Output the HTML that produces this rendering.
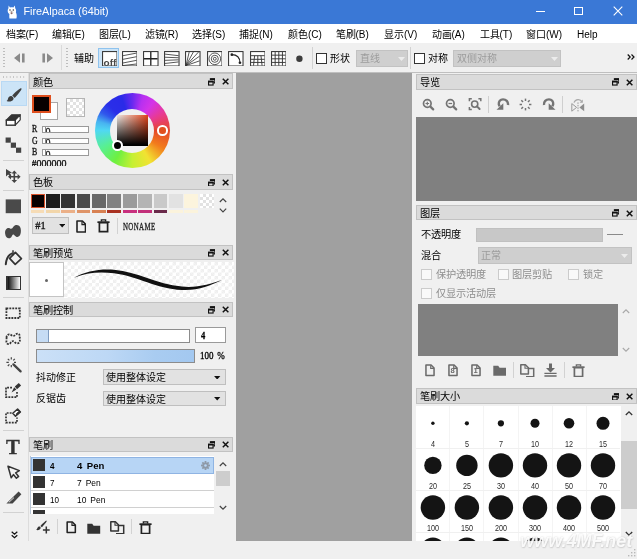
<!DOCTYPE html>
<html lang="zh-CN"><head><meta charset="utf-8"><title>FireAlpaca (64bit)</title>
<style>
*{box-sizing:border-box}
html,body{margin:0;padding:0}
body{width:637px;height:559px;overflow:hidden;background:#f0f0f0;position:relative;
 font-family:"Liberation Sans",sans-serif;font-size:10px;color:#000;line-height:1}
div,span,svg,i,b{position:absolute;display:block}
.t{white-space:nowrap;line-height:12px;height:12px}
.hd{background:#dbdbdb;border:1px solid #c2c2c2;height:15.7px}
.hd .t{left:3px;top:2.3px;font-size:10.2px}
.ser{font-family:"Liberation Serif",serif;-webkit-text-stroke:.3px currentColor}
.ck{background-color:#fff;background-image:linear-gradient(45deg,#e2e2e2 25%,transparent 25%,transparent 75%,#e2e2e2 75%),linear-gradient(45deg,#e2e2e2 25%,transparent 25%,transparent 75%,#e2e2e2 75%);background-size:8px 8px;background-position:0 0,4px 4px}
.sep{background:#d2d2d2;width:1px}
.hsep{background:#d2d2d2;height:1px}
.dd{background:#e2e2e2;border:1px solid #bfbfbf}
.cb{width:11px;height:11px;background:#fff;border:1px solid #333}
.cbd{width:11px;height:11px;background:#f9f9f9;border:1px solid #cbcbcb}
</style></head>
<body>
<div id="app" style="left:0;top:0;width:637px;height:559px;overflow:hidden;background:#f0f0f0;will-change:transform">
<div id="titlebar" style="left:0;top:0;width:637px;height:24px;background:#3a78d6"><svg style="left:7.4px;top:4.6px" width="11" height="14" viewBox="0 0 11 14"><path d="M1.6 .4L3 2.6C4.2 2.2 5.4 2.2 6.4 2.6L7.8 .4L8.3 3.4C9.2 4.4 9.3 6 8.9 7.4C9.8 9 10 11.4 9.4 13.4H2.4C2.2 11.6 2.2 10.2 2.4 9C1 8.2 .4 6.6 .8 4.8C.9 4.2 1.1 3.8 1.4 3.4Z" fill="#fff"/><ellipse cx="4.6" cy="7.2" rx="1.9" ry="1.7" fill="#e9e2de"/><circle cx="3" cy="5" r=".75" fill="#3a3a3a"/><circle cx="6.3" cy="5" r=".75" fill="#3a3a3a"/><ellipse cx="4.6" cy="8.3" rx=".9" ry="1" fill="#8f6a64"/><path d="M3.9 6.4h1.4l-.7.8z" fill="#555"/></svg><span class="t" style="left:23.5px;top:5px;font-size:10.8px;color:#fff;line-height:13px;height:13px">FireAlpaca (64bit)</span><div style="left:536px;top:11px;width:9px;height:1px;background:#fff"></div><div style="left:574px;top:7px;width:9px;height:8px;border:1px solid #fff"></div><svg style="left:613px;top:6px" width="10" height="10" viewBox="0 0 10 10"><path d="M.7 .7L9.3 9.3M9.3 .7L.7 9.3" stroke="#fff" stroke-width="1.1"/></svg></div>
<div id="menubar" style="left:0;top:24px;width:637px;height:19px;background:#fff"><span class="t" style="left:5.5px;top:5px">档案(F)</span><span class="t" style="left:51.5px;top:5px">编辑(E)</span><span class="t" style="left:98.5px;top:5px">图层(L)</span><span class="t" style="left:144.5px;top:5px">滤镜(R)</span><span class="t" style="left:192px;top:5px">选择(S)</span><span class="t" style="left:239px;top:5px">捕捉(N)</span><span class="t" style="left:288px;top:5px">颜色(C)</span><span class="t" style="left:335.5px;top:5px">笔刷(B)</span><span class="t" style="left:384px;top:5px">显示(V)</span><span class="t" style="left:431.5px;top:5px">动画(A)</span><span class="t" style="left:479.5px;top:5px">工具(T)</span><span class="t" style="left:526px;top:5px">窗口(W)</span><span class="t" style="left:577px;top:5px">Help</span></div>
<div id="toolbar" style="left:0;top:43px;width:637px;height:30px;background:#f0f0f0;border-bottom:1px solid #bfbfbf"><div style="left:3px;top:5px;width:2px;height:21px;background-image:linear-gradient(#bdbdbd 1px,transparent 1px);background-size:2px 3px"></div><div style="left:66px;top:5px;width:2px;height:21px;background-image:linear-gradient(#bdbdbd 1px,transparent 1px);background-size:2px 3px"></div><div class="sep" style="left:61px;top:2px;height:25px;background:#dadada"></div><svg style="left:14px;top:10px" width="11" height="10" viewBox="0 0 11 10"><path d="M6 .3V9.7L0 5Z M8 .5H10.6V9.5H8Z" fill="#8a8a8a"/></svg><svg style="left:42px;top:10px" width="11" height="10" viewBox="0 0 11 10"><path d="M5 .3V9.7L11 5Z M.4 .5H3V9.5H.4Z" fill="#8a8a8a"/></svg><span class="t" style="left:73.5px;top:10px">辅助</span><div style="left:98px;top:4.5px;width:21px;height:20.5px;background:#cce4f7;border:1px solid #8fc3ee"></div><svg style="left:101.5px;top:7.5px" width="15.6" height="15.6" viewBox="0 0 15 15"><rect x=".55" y=".55" width="13.9" height="13.9" fill="#fff" stroke="#333" stroke-width="1"/><text x="1.5" y="14" style="font-family:'Liberation Sans',sans-serif;font-weight:bold;font-size:9.6px" fill="#474747">off</text></svg><svg style="left:121.5px;top:7.5px" width="15.6" height="15.6" viewBox="0 0 15 15"><rect x=".55" y=".55" width="13.9" height="13.9" fill="#fff" stroke="#333" stroke-width="1"/><path d="M1 4.5L14 2M1 8L14 5.5M1 11.5L14 9M1 14L14 12.5" stroke="#333" stroke-width=".8" fill="none"/></svg><svg style="left:143px;top:7.5px" width="15.6" height="15.6" viewBox="0 0 15 15"><rect x=".55" y=".55" width="13.9" height="13.9" fill="#fff" stroke="#333" stroke-width="1"/><path d="M7.5 1V14M1 7.5H14" stroke="#222" stroke-width="1.3"/></svg><svg style="left:164px;top:7.5px" width="15.6" height="15.6" viewBox="0 0 15 15"><rect x=".55" y=".55" width="13.9" height="13.9" fill="#fff" stroke="#333" stroke-width="1"/><path d="M1 3L14 4.5M1 6L14 6.5M1 9L14 8.5M1 12L14 10.5" stroke="#333" stroke-width=".8" fill="none"/></svg><svg style="left:185px;top:7.5px" width="15.6" height="15.6" viewBox="0 0 15 15"><rect x=".55" y=".55" width="13.9" height="13.9" fill="#fff" stroke="#333" stroke-width="1"/><path d="M1 14L4 1M1 14L8 1M1 14L13 1M1 14L14 5M1 14L14 9.5" stroke="#333" stroke-width=".8" fill="none"/></svg><svg style="left:206.5px;top:7.5px" width="15.6" height="15.6" viewBox="0 0 15 15"><rect x=".55" y=".55" width="13.9" height="13.9" fill="#fff" stroke="#333" stroke-width="1"/><circle cx="7.5" cy="7.5" r="5.6" fill="none" stroke="#333" stroke-width=".8"/><circle cx="7.5" cy="7.5" r="3.4" fill="none" stroke="#333" stroke-width=".8"/><circle cx="7.5" cy="7.5" r="1.4" fill="none" stroke="#333" stroke-width=".8"/></svg><svg style="left:228px;top:7.5px" width="15.6" height="15.6" viewBox="0 0 15 15"><rect x=".55" y=".55" width="13.9" height="13.9" fill="#fff" stroke="#333" stroke-width="1"/><path d="M3.5 3.5C8.5 3.5 11.5 6.5 11.5 11.5" stroke="#222" stroke-width="1" fill="none"/><circle cx="3.7" cy="3.5" r="1.3" fill="#222"/><circle cx="11.5" cy="11.3" r="1.3" fill="#222"/></svg><svg style="left:249.5px;top:7.5px" width="15.6" height="15.6" viewBox="0 0 15 15"><rect x=".55" y=".55" width="13.9" height="13.9" fill="#fff" stroke="#333" stroke-width="1"/><path d="M1 4.5H14M1 8H14M1 11H14M4 8L3.4 14M7.5 8V14M11 8L11.6 14M4.5 4.5L4 8M7.5 4.5V8M10.5 4.5L11 8" stroke="#333" stroke-width=".9" fill="none"/></svg><svg style="left:270.5px;top:7.5px" width="15.6" height="15.6" viewBox="0 0 15 15"><rect x=".55" y=".55" width="13.9" height="13.9" fill="#fff" stroke="#333" stroke-width="1"/><path d="M1 4H14M1 7.5H14M1 11H14M4 1V14M7.5 1V14M11 1V14" stroke="#333" stroke-width=".9" fill="none"/></svg><svg style="left:295px;top:11px" width="9" height="9" viewBox="0 0 9 9"><circle cx="4.4" cy="4.7" r="3.2" fill="#3c3c3c"/></svg><div class="sep" style="left:312px;top:4px;height:22px"></div><div class="cb" style="left:315.5px;top:10px"></div><span class="t" style="left:329.5px;top:10px">形状</span><div style="left:355.5px;top:7px;width:52.5px;height:17px;background:#cfcfcf;border:1px solid #c2c2c2"><span class="t" style="left:3.5px;top:2px;color:#9c9c9c">直线</span><svg style="left:41px;top:6px" width="7" height="4" viewBox="0 0 7 4"><path d="M0 0H7L3.5 4Z" fill="#ececec"/></svg></div><div class="sep" style="left:410px;top:4px;height:22px"></div><div class="cb" style="left:413.5px;top:10px"></div><span class="t" style="left:428px;top:10px">对称</span><div style="left:453px;top:7px;width:108px;height:17px;background:#cfcfcf;border:1px solid #c2c2c2"><span class="t" style="left:3px;top:2px;color:#9c9c9c">双侧对称</span><svg style="left:96.5px;top:6px" width="7" height="4" viewBox="0 0 7 4"><path d="M0 0H7L3.5 4Z" fill="#ececec"/></svg></div><svg style="left:627px;top:10.5px" width="8" height="6" viewBox="0 0 8 6"><path d="M.7 .5L3.2 3L.7 5.5M4.5 .5L7 3L4.5 5.5" fill="none" stroke="#111" stroke-width="1.2"/></svg></div>
<div id="canvas" style="left:236px;top:73px;width:176px;height:468px;background:#a0a0a0"></div>
<div id="tools" style="left:0;top:73px;width:29px;height:468.5px;background:#f0f0f0;border-right:1px solid #dcdcdc;border-bottom:1px solid #d4d4d4"><div style="left:3px;top:3px;width:22px;height:2px;background-image:linear-gradient(90deg,#c0c0c0 1.2px,transparent 1.2px);background-size:3.4px 2px"></div><div style="left:1px;top:8px;width:26px;height:25px;background:#cce4f7;border:1px solid #b9d9f4"></div><svg style="left:4px;top:12px" width="20" height="20" viewBox="0 0 20 20"><g transform="translate(1.2 1.6) scale(.9)"><path d="M17.4 1.8C15.6 2.2 10.4 6.8 7.8 10L10.6 12.6C13.6 9.6 17.6 4.8 18.2 2.8C18.3 2.2 18 1.7 17.4 1.8Z" fill="#3f3f3f"/><path d="M7.4 10.6C5.6 9.9 3.6 11.2 3.2 13.2C3 14.4 2.5 15.3 1.6 15.9C3.8 17.2 7.6 16.8 9 14.4C9.8 13 9.2 11.4 7.4 10.6Z" fill="#3f3f3f"/></g></svg><svg style="left:4px;top:38px" width="20" height="20" viewBox="0 0 20 20"><path d="M2.3 9.2L7.6 3.8H16.2L11.2 9.2Z" fill="#333" stroke="#333" stroke-width="1.2" stroke-linejoin="round"/><path d="M11.2 9.2L16.2 3.8V8.8L11.2 14.2Z" fill="#fff" stroke="#333" stroke-width="1.2" stroke-linejoin="round"/><rect x="2.3" y="9.2" width="8.9" height="5" fill="#fff" stroke="#333" stroke-width="1.4"/></svg><svg style="left:4px;top:63px" width="20" height="20" viewBox="0 0 20 20"><rect x="1.6" y="1.5" width="5.2" height="5.2" fill="#444"/><rect x="6.8" y="6.6" width="5.2" height="5.2" fill="#444"/><rect x="12" y="11.6" width="5.2" height="5.2" fill="#444"/></svg><div class="hsep" style="left:3px;top:86.5px;width:21px"></div><svg style="left:4px;top:93.80000000000001px" width="20" height="20" viewBox="0 0 20 20"><path d="M2 2V9.6L4.2 7.6L6.3 9.4L7.4 8.2L5.6 6.6L8 5.8Z" fill="#444"/><path d="M10.3 3.6L13.1 6.6H11.1V9H13.6V7L16.6 9.8L13.6 12.6V10.6H11.1V13H13.1L10.3 16L7.5 13H9.5V10.6H7V12.6L4 9.8L7 7V9H9.5V6.6H7.5Z" fill="#444"/></svg><div class="hsep" style="left:3px;top:117px;width:21px"></div><svg style="left:4px;top:126px" width="20" height="20" viewBox="0 0 20 20"><rect x="1.7" y=".4" width="15.3" height="13.8" fill="#4a4a4a"/></svg><svg style="left:4px;top:151px" width="20" height="20" viewBox="0 0 20 20"><path d="M1.2 10C.4 5.6 3.4 2.8 6 4.4C7.4 5.2 8.4 4.6 9.4 2.8C11 .2 15.6 .4 16.6 4.2C17.2 6.6 17 9.8 15.6 11.8C14.2 13.6 11.8 13 10.6 11.4C9.6 10 8.6 10.4 7.8 12.2C6.4 15.4 1.8 15 1.2 10Z" fill="#474747"/></svg><svg style="left:4px;top:176px" width="20" height="20" viewBox="0 0 20 20"><path d="M11.4 3.4L17.4 9.6L11.2 15.4L5.6 9.4Z" fill="none" stroke="#333" stroke-width="1.7" stroke-linejoin="round"/><path d="M9 1.2V6.2" stroke="#333" stroke-width="1.5"/><path d="M7.8 4.6C4.2 6 2.4 9.6 1.8 15.2" fill="none" stroke="#333" stroke-width="2" stroke-linecap="round"/></svg><div style="left:5.5px;top:203px;width:15.5px;height:13.5px;border:1px solid #333;border-left-width:2px;background:linear-gradient(90deg,#111,#fff)"></div><div class="hsep" style="left:3px;top:223.8px;width:21px"></div><svg style="left:4px;top:233px" width="20" height="20" viewBox="0 0 20 20"><rect x="2.4" y="2.4" width="13.4" height="9.6" fill="none" stroke="#333" stroke-width="1.8" stroke-dasharray="1.9 1.05"/></svg><svg style="left:4px;top:258px" width="20" height="20" viewBox="0 0 20 20"><path d="M2.6 6.6C2.2 3.6 5.2 2.6 7.4 4.2C9 5.4 10.4 4.8 11.6 3.6C13.6 1.6 16 3 15.8 5.6C15.6 8 16.4 9.8 15.2 11.4C14 13 11.6 12.2 10.6 11C9.4 9.6 7.8 10 6.8 11.6C5.6 13.6 2.8 13.6 2.4 10.8Z" fill="none" stroke="#333" stroke-width="1.8" stroke-dasharray="1.9 1.1"/></svg><svg style="left:4px;top:281px" width="20" height="20" viewBox="0 0 20 20"><path d="M9.4 10.4L16.6 17.4" stroke="#444" stroke-width="2.3" stroke-linecap="round"/><path d="M7.3 3.2V5.6M7.3 11V13.2M2.4 8.4H4.8M10 8.4H12M3.8 4.8L5.4 6.4M10.8 4.8L9.3 6.4M3.8 12L5.4 10.4" stroke="#444" stroke-width="1.2"/></svg><svg style="left:4px;top:308px" width="20" height="20" viewBox="0 0 20 20"><path d="M8 6.6H2V16.2H13V11" fill="none" stroke="#333" stroke-width="1.7" stroke-dasharray="1.9 1.1"/><path d="M10.8 5.4L14.8 1.9L17.1 4.4L13 8.2Z" fill="#333"/><path d="M10.2 6.2L12.4 8.6L7.6 11.4Z" fill="#333"/></svg><svg style="left:4px;top:333px" width="20" height="20" viewBox="0 0 20 20"><path d="M7.6 7H2V16.6H13V11.6" fill="none" stroke="#333" stroke-width="1.7" stroke-dasharray="1.9 1.1"/><path d="M8.8 7.2L13.6 3L16.4 5.9L11.5 10.2Z" fill="#fff" stroke="#333" stroke-width="1.5" stroke-linejoin="round"/><path d="M12.6 7.4L15.4 5L16.4 5.9L12 9.8Z" fill="#333" stroke="#333" stroke-width=".8"/></svg><div class="hsep" style="left:3px;top:357px;width:21px"></div><span class="t ser" style="left:5.8px;top:362px;font-size:22px;font-weight:bold;line-height:24px;height:24px;color:#333;transform:scaleX(.94);transform-origin:0 0">T</span><svg style="left:4px;top:390px" width="20" height="20" viewBox="0 0 20 20"><path d="M4 3.2L15.4 7.6L11.6 9.8L14.6 13.4L12.4 15.2L9.4 11.6L7.2 14.8Z" fill="#f4f4f4" stroke="#333" stroke-width="1.5" stroke-linejoin="round"/></svg><svg style="left:4px;top:415px" width="20" height="20" viewBox="0 0 20 20"><path d="M2.4 15.4L14.6 3.4L17.4 6.2L8.6 15.4Z" fill="#444"/><path d="M4.8 14.4L10 9.6" stroke="#ddd" stroke-width="1"/></svg><div class="hsep" style="left:3px;top:439px;width:21px"></div><svg style="left:10.5px;top:458px" width="7" height="8" viewBox="0 0 7 8"><path d="M.7 .7L3.5 3.2L6.3 .7M.7 4.3L3.5 6.8L6.3 4.3" fill="none" stroke="#111" stroke-width="1.2"/></svg></div>
<div class="hd" style="left:28.6px;top:73.4px;width:204.1px;height:15.7px"><span class="t">颜色</span></div><svg style="left:208.1px;top:77.80000000000001px" width="7.4" height="7.8" viewBox="0 0 8 8"><path d="M2.6 1 H7.4 V5 H6" fill="none" stroke="#111" stroke-width="1.25"/><path d="M2 1H8" stroke="#111" stroke-width="2"/><rect x=".6" y="3.6" width="4.9" height="3.8" fill="#dbdbdb" stroke="#111" stroke-width="1.25"/><path d="M0 3.6H6.1" stroke="#111" stroke-width="2"/></svg><svg style="left:221.79999999999998px;top:78.2px" width="7.2" height="7" viewBox="0 0 8 8"><path d="M.8 .8L7.2 7.2M7.2 .8L.8 7.2" stroke="#111" stroke-width="1.65"/></svg><div style="left:40px;top:102.3px;width:18px;height:18px;background:#fff;border:1px solid #a8a8a8"></div><div style="left:32px;top:94.5px;width:18.5px;height:18.5px;background:#080000;border:2px solid #df4f1e"></div><div class="ck" style="left:66px;top:98px;width:19px;height:19px;border:1px solid #b4b4b4;background-size:6px 6px;background-position:0 0,3px 3px"></div><span class="t ser" style="left:31.5px;top:123.1px;font-size:9.6px;transform:scaleX(.82);transform-origin:0 0;color:#111">R</span><div style="left:42px;top:126px;width:46.5px;height:6.5px;background:#fff;border:1px solid #9a9a9a;overflow:hidden"><span class="t ser" style="left:2.5px;top:-1.5px;font-size:10px;color:#222;letter-spacing:-.5px">0</span><i style="left:1.5px;top:0;width:1px;height:5px;background:#888"></i></div><span class="t ser" style="left:31.5px;top:134.6px;font-size:9.6px;transform:scaleX(.82);transform-origin:0 0;color:#111">G</span><div style="left:42px;top:137.5px;width:46.5px;height:6.5px;background:#fff;border:1px solid #9a9a9a;overflow:hidden"><span class="t ser" style="left:2.5px;top:-1.5px;font-size:10px;color:#222;letter-spacing:-.5px">0</span><i style="left:1.5px;top:0;width:1px;height:5px;background:#888"></i></div><span class="t ser" style="left:31.5px;top:146.1px;font-size:9.6px;transform:scaleX(.82);transform-origin:0 0;color:#111">B</span><div style="left:42px;top:149px;width:46.5px;height:6.5px;background:#fff;border:1px solid #9a9a9a;overflow:hidden"><span class="t ser" style="left:2.5px;top:-1.5px;font-size:10px;color:#222;letter-spacing:-.5px">0</span><i style="left:1.5px;top:0;width:1px;height:5px;background:#888"></i></div><div style="left:31.5px;top:159.5px;width:40px;height:6.6px;overflow:hidden"><span class="t ser" style="left:0;top:-2px;font-size:10px;color:#111">#000000</span></div><div style="left:94.5px;top:92.7px;width:75.6px;height:75.6px;border-radius:50%;background:conic-gradient(from 90deg,#e4482a,#f27c1c 8.3%,#f2e232 16.7%,#c6f032 25%,#6ef040 33.3%,#58f092 41.7%,#50d8f2 50%,#48b4f0 54%,#3058ec 58.5%,#2a2ee8 63%,#2a2ae8 70%,#6a2af0 75%,#b830f0 80%,#d434e8 85%,#e83a90 92%,#e4482a)"></div><div style="left:110.3px;top:108.5px;width:44px;height:44px;border-radius:50%;background:#f0f0f0"></div><div style="left:117px;top:115px;width:31px;height:31px;background:linear-gradient(to top,#000 4%,rgba(0,0,0,0)),linear-gradient(to right,#ece8e4,#e2441a)"></div><div style="left:157px;top:125px;width:10.5px;height:10.5px;border-radius:50%;border:2px solid #fff;background:#e0501e"></div><div style="left:111.5px;top:139.5px;width:11px;height:11px;border-radius:50%;border:2px solid #fff;background:#000"></div><div class="hd" style="left:28.6px;top:174.1px;width:204.1px;height:15.7px"><span class="t">色板</span></div><svg style="left:208.1px;top:178.5px" width="7.4" height="7.8" viewBox="0 0 8 8"><path d="M2.6 1 H7.4 V5 H6" fill="none" stroke="#111" stroke-width="1.25"/><path d="M2 1H8" stroke="#111" stroke-width="2"/><rect x=".6" y="3.6" width="4.9" height="3.8" fill="#dbdbdb" stroke="#111" stroke-width="1.25"/><path d="M0 3.6H6.1" stroke="#111" stroke-width="2"/></svg><svg style="left:221.79999999999998px;top:178.9px" width="7.2" height="7" viewBox="0 0 8 8"><path d="M.8 .8L7.2 7.2M7.2 .8L.8 7.2" stroke="#111" stroke-width="1.65"/></svg><div style="left:30.6px;top:193.7px;width:14.4px;height:14.8px;background:#080000;border:1.5px solid #d9512a"></div><div style="left:30.6px;top:209.6px;width:13.8px;height:3.8px;background:#f6dcb6"></div><div style="left:46.0px;top:194px;width:13.8px;height:14.3px;background:#1d1d1d"></div><div style="left:46.0px;top:209.6px;width:13.8px;height:3.8px;background:#f2d6aa"></div><div style="left:61.3px;top:194px;width:13.8px;height:14.3px;background:#333"></div><div style="left:61.3px;top:209.6px;width:13.8px;height:3.8px;background:#ebb088"></div><div style="left:76.7px;top:194px;width:13.8px;height:14.3px;background:#4b4b4b"></div><div style="left:76.7px;top:209.6px;width:13.8px;height:3.8px;background:#df9468"></div><div style="left:92.1px;top:194px;width:13.8px;height:14.3px;background:#686868"></div><div style="left:92.1px;top:209.6px;width:13.8px;height:3.8px;background:#d88152"></div><div style="left:107.4px;top:194px;width:13.8px;height:14.3px;background:#828282"></div><div style="left:107.4px;top:209.6px;width:13.8px;height:3.8px;background:#a93222"></div><div style="left:122.8px;top:194px;width:13.8px;height:14.3px;background:#9b9b9b"></div><div style="left:122.8px;top:209.6px;width:13.8px;height:3.8px;background:#c8307e"></div><div style="left:138.2px;top:194px;width:13.8px;height:14.3px;background:#b4b4b4"></div><div style="left:138.2px;top:209.6px;width:13.8px;height:3.8px;background:#c2307a"></div><div style="left:153.6px;top:194px;width:13.8px;height:14.3px;background:#c9c9c9"></div><div style="left:153.6px;top:209.6px;width:13.8px;height:3.8px;background:#6a2a4a"></div><div style="left:168.9px;top:194px;width:13.8px;height:14.3px;background:#e2e2e2"></div><div style="left:168.9px;top:209.6px;width:13.8px;height:3.8px;background:#fbf3dc"></div><div style="left:184.3px;top:194px;width:13.8px;height:14.3px;background:#fcf4dd"></div><div style="left:184.3px;top:209.6px;width:13.8px;height:3.8px;background:#fbf3dc"></div><div class="ck" style="left:199.7px;top:194px;width:14px;height:14.3px;background-size:6px 6px;background-position:0 0,3px 3px"></div><svg style="left:218.5px;top:197px" width="8" height="17" viewBox="0 0 8 17"><path d="M.8 5L4 1.8L7.2 5M.8 11.6L4 14.8L7.2 11.6" fill="none" stroke="#444" stroke-width="1.2"/></svg><div class="dd" style="left:32.3px;top:217.4px;width:37px;height:16.8px"><span class="t ser" style="left:2px;top:1.8px;font-size:10.4px;color:#111">#1</span><svg style="left:25.4px;top:5.8px" width="6.4" height="3.5" viewBox="0 0 7 4"><path d="M0 0H7L3.5 4Z" fill="#111"/></svg></div><svg style="left:75.5px;top:219.5px" width="10.5" height="13" viewBox="0 0 10.5 13"><path d="M1 1H6.4L9.5 4.2V12H1Z" fill="#f0f0f0" stroke="#222" stroke-width="1.6" stroke-linejoin="round"/><path d="M6 1.2V4.6H9.4" fill="none" stroke="#222" stroke-width="1.2"/></svg><svg style="left:97.3px;top:219px" width="13" height="13.5" viewBox="0 0 13 13.5"><path d="M2.4 3.6H10.6V12.6H2.4Z" fill="#f0f0f0" stroke="#222" stroke-width="1.7"/><path d="M.4 3.2H12.6" stroke="#222" stroke-width="1.7"/><path d="M4.4 2.6V.9H8.6V2.6" fill="none" stroke="#222" stroke-width="1.4"/></svg><div class="sep" style="left:117px;top:218px;height:16px"></div><span class="t ser" style="left:122.5px;top:220.5px;font-size:9.6px;letter-spacing:.5px;transform:scaleX(.72);transform-origin:0 0;color:#222">NONAME</span><div class="hd" style="left:28.6px;top:244.6px;width:204.1px;height:15.7px"><span class="t">笔刷预览</span></div><svg style="left:208.1px;top:249.0px" width="7.4" height="7.8" viewBox="0 0 8 8"><path d="M2.6 1 H7.4 V5 H6" fill="none" stroke="#111" stroke-width="1.25"/><path d="M2 1H8" stroke="#111" stroke-width="2"/><rect x=".6" y="3.6" width="4.9" height="3.8" fill="#dbdbdb" stroke="#111" stroke-width="1.25"/><path d="M0 3.6H6.1" stroke="#111" stroke-width="2"/></svg><svg style="left:221.79999999999998px;top:249.4px" width="7.2" height="7" viewBox="0 0 8 8"><path d="M.8 .8L7.2 7.2M7.2 .8L.8 7.2" stroke="#111" stroke-width="1.65"/></svg><div class="ck" style="left:63.5px;top:262px;width:170px;height:36px;background-color:#fff;background-image:linear-gradient(45deg,#efefef 25%,transparent 25%,transparent 75%,#efefef 75%),linear-gradient(45deg,#efefef 25%,transparent 25%,transparent 75%,#efefef 75%);background-size:7px 7px;background-position:0 0,3.5px 3.5px"></div><div style="left:28.8px;top:262.3px;width:34.8px;height:34.7px;background:#fff;border:1px solid #c4c4c4"></div><div style="left:44.7px;top:278.6px;width:3px;height:3px;border-radius:50%;background:#666"></div><svg style="left:63.5px;top:262px" width="170" height="36" viewBox="0 0 170 36"><path d="M10 15.8C22 9 36 6.6 50 7.8C74 10 92 22 118 24.6C134 26 146 22 158 18C146 23.8 134 28.8 118 28C92 26.6 74 14.4 50 11.2C36 9.4 22 10.4 10 15.8Z" fill="#111"/></svg><div class="hd" style="left:28.6px;top:301.6px;width:204.1px;height:15.7px"><span class="t">笔刷控制</span></div><svg style="left:208.1px;top:306.0px" width="7.4" height="7.8" viewBox="0 0 8 8"><path d="M2.6 1 H7.4 V5 H6" fill="none" stroke="#111" stroke-width="1.25"/><path d="M2 1H8" stroke="#111" stroke-width="2"/><rect x=".6" y="3.6" width="4.9" height="3.8" fill="#dbdbdb" stroke="#111" stroke-width="1.25"/><path d="M0 3.6H6.1" stroke="#111" stroke-width="2"/></svg><svg style="left:221.79999999999998px;top:306.40000000000003px" width="7.2" height="7" viewBox="0 0 8 8"><path d="M.8 .8L7.2 7.2M7.2 .8L.8 7.2" stroke="#111" stroke-width="1.65"/></svg><div style="left:36px;top:328.8px;width:154.3px;height:14px;background:#fff;border:1px solid #8c8c8c"><i style="left:0;top:0;width:11.6px;height:12px;background:#c6dcf4;border-right:1px solid #7f9cc0"></i></div><div style="left:195px;top:327px;width:30.5px;height:16.3px;background:#fff;border:1px solid #9a9a9a"><span class="t ser" style="left:4.6px;top:1.8px;font-size:10px;transform:scaleX(.85);transform-origin:0 0;color:#000;font-weight:bold">4</span></div><div style="left:36px;top:349px;width:159.3px;height:14px;border:1px solid #8c8c8c;background:linear-gradient(90deg,#cbe0f7,#bdd8f5 45%,#a9ccf1 75%,#a3c8f0)"></div><span class="t ser" style="left:200px;top:350.3px;font-size:10px;word-spacing:1.6px;transform:scaleX(.9);transform-origin:0 0;color:#000">100 %</span><span class="t" style="left:36px;top:371.7px">抖动修正</span><span class="t" style="left:36px;top:393.2px">反锯齿</span><div class="dd" style="left:103px;top:369px;width:122.5px;height:15.8px"><span class="t" style="left:2px;top:2.1px">使用整体设定</span><svg style="left:110.2px;top:5.8px" width="6.4" height="3.6" viewBox="0 0 7 4"><path d="M0 0H7L3.5 4Z" fill="#111"/></svg></div><div class="dd" style="left:103px;top:390.5px;width:122.5px;height:15.8px"><span class="t" style="left:2px;top:2.1px">使用整体设定</span><svg style="left:110.2px;top:5.8px" width="6.4" height="3.6" viewBox="0 0 7 4"><path d="M0 0H7L3.5 4Z" fill="#111"/></svg></div><div class="hd" style="left:28.6px;top:436.5px;width:204.1px;height:15.7px"><span class="t">笔刷</span></div><svg style="left:208.1px;top:440.9px" width="7.4" height="7.8" viewBox="0 0 8 8"><path d="M2.6 1 H7.4 V5 H6" fill="none" stroke="#111" stroke-width="1.25"/><path d="M2 1H8" stroke="#111" stroke-width="2"/><rect x=".6" y="3.6" width="4.9" height="3.8" fill="#dbdbdb" stroke="#111" stroke-width="1.25"/><path d="M0 3.6H6.1" stroke="#111" stroke-width="2"/></svg><svg style="left:221.79999999999998px;top:441.3px" width="7.2" height="7" viewBox="0 0 8 8"><path d="M.8 .8L7.2 7.2M7.2 .8L.8 7.2" stroke="#111" stroke-width="1.65"/></svg><div style="left:30px;top:456px;width:184px;height:58.4px;background:#fff;border-left:1px solid #b9c6d6;overflow:hidden"><div style="left:0;top:0.5px;width:183px;height:17px;background:#b7d5f5;border:1px solid #8fb4e3;"><i style="left:1.2999999999999998px;top:1px;width:12px;height:12px;background:#333"></i><span class="t" style="left:17.6px;top:2.1px;font-weight:bold;font-size:9.4px;transform:scaleX(.86);transform-origin:0 0">4</span><span class="t" style="left:44.6px;top:2.1px;font-weight:bold;font-size:9.4px;word-spacing:1.8px;transform:scaleX(1.02);transform-origin:0 0">4 Pen</span></div><div style="left:0;top:17.5px;width:183px;height:17px;background:#fff;border-bottom:1px solid #d0d0d0;"><i style="left:2.3px;top:2px;width:12px;height:12px;background:#333"></i><span class="t" style="left:18.6px;top:3.1px;font-size:9.4px;transform:scaleX(.86);transform-origin:0 0">7</span><span class="t" style="left:45.6px;top:3.1px;font-size:9.4px;word-spacing:1.8px;transform:scaleX(0.9);transform-origin:0 0">7 Pen</span></div><div style="left:0;top:34.5px;width:183px;height:17px;background:#fff;border-bottom:1px solid #d0d0d0;"><i style="left:2.3px;top:2px;width:12px;height:12px;background:#333"></i><span class="t" style="left:18.6px;top:3.1px;font-size:9.4px;transform:scaleX(.86);transform-origin:0 0">10</span><span class="t" style="left:45.6px;top:3.1px;font-size:9.4px;word-spacing:1.8px;transform:scaleX(0.9);transform-origin:0 0">10 Pen</span></div><div style="left:0;top:51.5px;width:183px;height:17px;background:#fff;border-bottom:1px solid #d0d0d0;"><i style="left:2.3px;top:2px;width:12px;height:12px;background:#333"></i><span class="t" style="left:18.6px;top:3.1px;font-size:9.4px;transform:scaleX(.86);transform-origin:0 0">15</span><span class="t" style="left:45.6px;top:3.1px;font-size:9.4px;word-spacing:1.8px;transform:scaleX(0.9);transform-origin:0 0">15 Pen</span></div></div><svg style="left:201px;top:461px" width="9" height="9" viewBox="0 0 9 9"><rect x="3.6" y="0" width="1.8" height="9" transform="rotate(0 4.5 4.5)" fill="#8f9aa8"/><rect x="3.6" y="0" width="1.8" height="9" transform="rotate(45 4.5 4.5)" fill="#8f9aa8"/><rect x="3.6" y="0" width="1.8" height="9" transform="rotate(90 4.5 4.5)" fill="#8f9aa8"/><rect x="3.6" y="0" width="1.8" height="9" transform="rotate(135 4.5 4.5)" fill="#8f9aa8"/><circle cx="4.5" cy="4.5" r="3.1" fill="#8f9aa8"/><circle cx="4.5" cy="4.5" r="1.3" fill="#b7d5f5"/></svg><svg style="left:218.5px;top:460.5px" width="8" height="7" viewBox="0 0 8 7"><path d="M.8 5L4 1.8L7.2 5" fill="none" stroke="#444" stroke-width="1.2"/></svg><div style="left:215.7px;top:471px;width:14.6px;height:14.6px;background:#cdcdcd"></div><svg style="left:218.5px;top:503.5px" width="8" height="7" viewBox="0 0 8 7"><path d="M.8 2L4 5.2L7.2 2" fill="none" stroke="#444" stroke-width="1.2"/></svg><svg style="left:36px;top:520px" width="15" height="14" viewBox="0 0 15 14"><path d="M10.4 .6C9.4 1 6 4.2 4.4 6L5.8 7.3C7.4 5.6 10.2 2.2 10.7 1.2Z" fill="#333"/><path d="M3.9 6.6C2.8 6.2 1.7 7 1.4 8.1C1.2 8.9.8 9.4.2 9.8C1.6 10.5 3.6 10.1 4.4 8.8C4.9 8 4.7 7.1 3.9 6.6Z" fill="#333"/><path d="M10.3 6.6V13.4M6.9 10H13.7" stroke="#333" stroke-width="1.5"/></svg><div class="sep" style="left:57px;top:519px;height:15px"></div><svg style="left:66px;top:521px" width="10.5" height="12.5" viewBox="0 0 10.5 13"><path d="M1 1H6.4L9.5 4.2V12H1Z" fill="#f0f0f0" stroke="#222" stroke-width="1.6" stroke-linejoin="round"/><path d="M6 1.2V4.6H9.4" fill="none" stroke="#222" stroke-width="1.2"/></svg><svg style="left:87px;top:523px" width="13.5" height="11" viewBox="0 0 13.5 11"><path d="M.3 .8H5.2L6.6 2.8H13.2V10.7H.3Z" fill="#333"/></svg><svg style="left:110px;top:520.5px" width="14.5" height="13.5" viewBox="0 0 14.5 13.5"><path d="M8.4 4.4H13.7V12.7H6" fill="none" stroke="#333" stroke-width="1.5"/><path d="M.8 .8H5.4L8.4 3.8V10H.8Z" fill="#f0f0f0" stroke="#333" stroke-width="1.5" stroke-linejoin="round"/><path d="M5 1V4.2H8.2" fill="none" stroke="#333" stroke-width="1.1"/></svg><div class="sep" style="left:131px;top:519px;height:15px"></div><svg style="left:139px;top:520.5px" width="13" height="13.5" viewBox="0 0 13 13.5"><path d="M2.4 3.6H10.6V12.6H2.4Z" fill="#f0f0f0" stroke="#222" stroke-width="1.7"/><path d="M.4 3.2H12.6" stroke="#222" stroke-width="1.7"/><path d="M4.4 2.6V.9H8.6V2.6" fill="none" stroke="#222" stroke-width="1.4"/></svg>
<div class="hd" style="left:416.1px;top:73.8px;width:220.5px;height:16.1px"><span class="t">导览</span></div><svg style="left:612.0px;top:78.2px" width="7.4" height="7.8" viewBox="0 0 8 8"><path d="M2.6 1 H7.4 V5 H6" fill="none" stroke="#111" stroke-width="1.25"/><path d="M2 1H8" stroke="#111" stroke-width="2"/><rect x=".6" y="3.6" width="4.9" height="3.8" fill="#dbdbdb" stroke="#111" stroke-width="1.25"/><path d="M0 3.6H6.1" stroke="#111" stroke-width="2"/></svg><svg style="left:625.7px;top:78.6px" width="7.2" height="7" viewBox="0 0 8 8"><path d="M.8 .8L7.2 7.2M7.2 .8L.8 7.2" stroke="#111" stroke-width="1.65"/></svg><svg style="left:422px;top:97.5px" width="13" height="13" viewBox="0 0 13 13"><circle cx="5.3" cy="5.5" r="3.8" fill="none" stroke="#747474" stroke-width="1.7"/><path d="M8.4 8.6L11.2 11.4" stroke="#747474" stroke-width="2.2" stroke-linecap="round"/><path d="M3.5 5.5H7.1M5.3 3.7V7.3" stroke="#747474" stroke-width="1.1"/></svg><svg style="left:444.8px;top:97.5px" width="13" height="13" viewBox="0 0 13 13"><circle cx="5.3" cy="5.5" r="3.8" fill="none" stroke="#747474" stroke-width="1.7"/><path d="M8.4 8.6L11.2 11.4" stroke="#747474" stroke-width="2.2" stroke-linecap="round"/><path d="M3.5 5.5H7.1" stroke="#747474" stroke-width="1.2"/></svg><svg style="left:467.5px;top:97px" width="14" height="14" viewBox="0 0 14 14"><circle cx="6.7" cy="7.1" r="3.1" fill="none" stroke="#747474" stroke-width="1.6"/><path d="M9 9.4L11.6 12" stroke="#747474" stroke-width="2" stroke-linecap="round"/><path d="M1.4 4.2V1.8H3.8M10.4 1.8H12.8V4.2M1.4 10V12.4H3.8" fill="none" stroke="#747474" stroke-width="1.5"/></svg><div class="sep" style="left:488px;top:96px;height:17px;background:#cfcfcf"></div><svg style="left:495.5px;top:97px" width="14" height="14" viewBox="0 0 14 14"><path d="M12 8C12.4 4.6 10 2.4 7 2.4C4.2 2.4 2.6 4.6 2.8 7.2L3.6 9.4" fill="none" stroke="#747474" stroke-width="2.4"/><path d="M.5 12.7H7.3V6.2Z" fill="#747474"/></svg><svg style="left:519.1px;top:97.7px" width="13" height="13" viewBox="0 0 13 13"><path d="M6.5 .6V3" stroke="#747474" stroke-width="1.5" transform="rotate(0 6.5 6.5)"/><path d="M6.5 .6V3" stroke="#747474" stroke-width="1.5" transform="rotate(45 6.5 6.5)"/><path d="M6.5 .6V3" stroke="#747474" stroke-width="1.5" transform="rotate(90 6.5 6.5)"/><path d="M6.5 .6V3" stroke="#747474" stroke-width="1.5" transform="rotate(135 6.5 6.5)"/><path d="M6.5 .6V3" stroke="#747474" stroke-width="1.5" transform="rotate(180 6.5 6.5)"/><path d="M6.5 .6V3" stroke="#747474" stroke-width="1.5" transform="rotate(225 6.5 6.5)"/><path d="M6.5 .6V3" stroke="#747474" stroke-width="1.5" transform="rotate(270 6.5 6.5)"/><path d="M6.5 .6V3" stroke="#747474" stroke-width="1.5" transform="rotate(315 6.5 6.5)"/></svg><svg style="left:541.5px;top:97px" width="14" height="14" viewBox="0 0 14 14"><path d="M2 8C1.6 4.6 4 2.4 7 2.4C9.8 2.4 11.4 4.6 11.2 7.2L10.4 9.4" fill="none" stroke="#747474" stroke-width="2.4"/><path d="M13.5 12.7H6.7V6.2Z" fill="#747474"/></svg><div class="sep" style="left:562px;top:96px;height:17px;background:#cfcfcf"></div><svg style="left:570.5px;top:96.5px" width="14" height="15" viewBox="0 0 14 15"><path d="M3 5.6C4.4 2 9.4 1.6 11 5" fill="none" stroke="#a9a9a9" stroke-width="1.2"/><path d="M11.8 2.6V5.8H8.6Z" fill="#a9a9a9"/><path d="M.8 6.6L5.6 10.4L.8 14.2Z" fill="none" stroke="#9a9a9a" stroke-width="1"/><path d="M13.2 6.6L8.4 10.4L13.2 14.2Z" fill="#8d8d8d"/><path d="M7 5.4V14.8" stroke="#9a9a9a" stroke-width="1" stroke-dasharray="1.5 1"/></svg><div style="left:416px;top:117px;width:221px;height:83.7px;background:#808080"></div><div class="hd" style="left:416.1px;top:204.7px;width:220.5px;height:15.7px"><span class="t">图层</span></div><svg style="left:612.0px;top:209.1px" width="7.4" height="7.8" viewBox="0 0 8 8"><path d="M2.6 1 H7.4 V5 H6" fill="none" stroke="#111" stroke-width="1.25"/><path d="M2 1H8" stroke="#111" stroke-width="2"/><rect x=".6" y="3.6" width="4.9" height="3.8" fill="#dbdbdb" stroke="#111" stroke-width="1.25"/><path d="M0 3.6H6.1" stroke="#111" stroke-width="2"/></svg><svg style="left:625.7px;top:209.5px" width="7.2" height="7" viewBox="0 0 8 8"><path d="M.8 .8L7.2 7.2M7.2 .8L.8 7.2" stroke="#111" stroke-width="1.65"/></svg><span class="t" style="left:420.6px;top:228.7px;font-size:10.2px">不透明度</span><div style="left:476px;top:228px;width:126.5px;height:13.5px;background:#c8c8c8;border:1px solid #c0c0c0"></div><div style="left:607.4px;top:234px;width:15.2px;height:1px;background:#8a8a8a"></div><span class="t" style="left:420.6px;top:249.5px;font-size:10.2px">混合</span><div style="left:478px;top:246.5px;width:153.5px;height:17px;background:#cfcfcf;border:1px solid #c2c2c2"><span class="t" style="left:2.2px;top:2px;color:#9c9c9c">正常</span><svg style="left:142px;top:6.5px" width="7" height="4" viewBox="0 0 7 4"><path d="M0 0H7L3.5 4Z" fill="#ececec"/></svg></div><div class="cbd" style="left:421.4px;top:269px"></div><span class="t" style="left:436.2px;top:268.5px;color:#8e8e8e;font-size:10.2px">保护透明度</span><div class="cbd" style="left:497.6px;top:269px"></div><span class="t" style="left:512.4px;top:268.5px;color:#8e8e8e;font-size:10.2px">图层剪贴</span><div class="cbd" style="left:568px;top:269px"></div><span class="t" style="left:582.8px;top:268.5px;color:#8e8e8e;font-size:10.2px">锁定</span><div class="cbd" style="left:421.4px;top:288px"></div><span class="t" style="left:436.2px;top:287.5px;color:#8e8e8e;font-size:10.2px">仅显示活动层</span><div style="left:417.6px;top:304px;width:200.6px;height:52.4px;background:#808080"></div><svg style="left:622px;top:308px" width="8" height="7" viewBox="0 0 8 7"><path d="M.8 5L4 1.8L7.2 5" fill="none" stroke="#a8a8a8" stroke-width="1.1"/></svg><svg style="left:622px;top:346px" width="8" height="7" viewBox="0 0 8 7"><path d="M.8 2L4 5.2L7.2 2" fill="none" stroke="#a8a8a8" stroke-width="1.1"/></svg><svg style="left:425px;top:364px" width="10" height="12.5" viewBox="0 0 10.5 13"><path d="M1 1H6.4L9.5 4.2V12H1Z" fill="#f0f0f0" stroke="#6a6a6a" stroke-width="1.6" stroke-linejoin="round"/><path d="M6 1.2V4.6H9.4" fill="none" stroke="#6a6a6a" stroke-width="1.2"/></svg><svg style="left:448px;top:364px" width="10" height="12.5" viewBox="0 0 10.5 13"><path d="M1 1H6.4L9.5 4.2V12H1Z" fill="#f0f0f0" stroke="#6a6a6a" stroke-width="1.6" stroke-linejoin="round"/><path d="M6 1.2V4.6H9.4" fill="none" stroke="#6a6a6a" stroke-width="1.2"/></svg><span class="t" style="left:450.5px;top:367.4px;font-size:7.6px;line-height:8px;height:8px;font-weight:bold;color:#6a6a6a">8</span><svg style="left:471px;top:364px" width="10" height="12.5" viewBox="0 0 10.5 13"><path d="M1 1H6.4L9.5 4.2V12H1Z" fill="#f0f0f0" stroke="#6a6a6a" stroke-width="1.6" stroke-linejoin="round"/><path d="M6 1.2V4.6H9.4" fill="none" stroke="#6a6a6a" stroke-width="1.2"/></svg><span class="t" style="left:473.5px;top:367.4px;font-size:7.6px;line-height:8px;height:8px;font-weight:bold;color:#6a6a6a">1</span><svg style="left:492.5px;top:364.6px" width="13.5" height="11" viewBox="0 0 13.5 11"><path d="M.3 .8H5.2L6.6 2.8H13.2V10.7H.3Z" fill="#6a6a6a"/></svg><div class="sep" style="left:513px;top:362px;height:16px"></div><svg style="left:520px;top:363.5px" width="14.5" height="13.5" viewBox="0 0 14.5 13.5"><path d="M8.4 4.4H13.7V12.7H6" fill="none" stroke="#6a6a6a" stroke-width="1.5"/><path d="M.8 .8H5.4L8.4 3.8V10H.8Z" fill="#f0f0f0" stroke="#6a6a6a" stroke-width="1.5" stroke-linejoin="round"/><path d="M5 1V4.2H8.2" fill="none" stroke="#6a6a6a" stroke-width="1.1"/></svg><svg style="left:544px;top:363px" width="13" height="14" viewBox="0 0 13 14"><path d="M5 .4H8V5H11L6.5 9.6L2 5H5Z" fill="#6a6a6a"/><path d="M.4 10.4H12.6M.4 13H12.6" stroke="#6a6a6a" stroke-width="1.4"/></svg><div class="sep" style="left:564px;top:362px;height:16px"></div><svg style="left:572px;top:363.5px" width="13" height="13.5" viewBox="0 0 13 13.5"><path d="M2.4 3.6H10.6V12.6H2.4Z" fill="#f0f0f0" stroke="#6a6a6a" stroke-width="1.7"/><path d="M.4 3.2H12.6" stroke="#6a6a6a" stroke-width="1.7"/><path d="M4.4 2.6V.9H8.6V2.6" fill="none" stroke="#6a6a6a" stroke-width="1.4"/></svg><div class="hd" style="left:416.1px;top:388.2px;width:220.5px;height:15.7px"><span class="t">笔刷大小</span></div><svg style="left:612.0px;top:392.59999999999997px" width="7.4" height="7.8" viewBox="0 0 8 8"><path d="M2.6 1 H7.4 V5 H6" fill="none" stroke="#111" stroke-width="1.25"/><path d="M2 1H8" stroke="#111" stroke-width="2"/><rect x=".6" y="3.6" width="4.9" height="3.8" fill="#dbdbdb" stroke="#111" stroke-width="1.25"/><path d="M0 3.6H6.1" stroke="#111" stroke-width="2"/></svg><svg style="left:625.7px;top:393.0px" width="7.2" height="7" viewBox="0 0 8 8"><path d="M.8 .8L7.2 7.2M7.2 .8L.8 7.2" stroke="#111" stroke-width="1.65"/></svg><div style="left:416px;top:406.4px;width:204.6px;height:134.6px;background:#fff;overflow:hidden"><span class="t" style="left:4.9px;top:31.5px;width:24px;text-align:center;font-size:8.4px;transform:scaleX(.86);color:#2a2a2a">4</span><span class="t" style="left:38.9px;top:31.5px;width:24px;text-align:center;font-size:8.4px;transform:scaleX(.86);color:#2a2a2a">5</span><span class="t" style="left:72.9px;top:31.5px;width:24px;text-align:center;font-size:8.4px;transform:scaleX(.86);color:#2a2a2a">7</span><span class="t" style="left:107.0px;top:31.5px;width:24px;text-align:center;font-size:8.4px;transform:scaleX(.86);color:#2a2a2a">10</span><span class="t" style="left:141.0px;top:31.5px;width:24px;text-align:center;font-size:8.4px;transform:scaleX(.86);color:#2a2a2a">12</span><span class="t" style="left:175.0px;top:31.5px;width:24px;text-align:center;font-size:8.4px;transform:scaleX(.86);color:#2a2a2a">15</span><span class="t" style="left:4.9px;top:73.6px;width:24px;text-align:center;font-size:8.4px;transform:scaleX(.86);color:#2a2a2a">20</span><span class="t" style="left:38.9px;top:73.6px;width:24px;text-align:center;font-size:8.4px;transform:scaleX(.86);color:#2a2a2a">25</span><span class="t" style="left:72.9px;top:73.6px;width:24px;text-align:center;font-size:8.4px;transform:scaleX(.86);color:#2a2a2a">30</span><span class="t" style="left:107.0px;top:73.6px;width:24px;text-align:center;font-size:8.4px;transform:scaleX(.86);color:#2a2a2a">40</span><span class="t" style="left:141.0px;top:73.6px;width:24px;text-align:center;font-size:8.4px;transform:scaleX(.86);color:#2a2a2a">50</span><span class="t" style="left:175.0px;top:73.6px;width:24px;text-align:center;font-size:8.4px;transform:scaleX(.86);color:#2a2a2a">70</span><span class="t" style="left:4.9px;top:115.7px;width:24px;text-align:center;font-size:8.4px;transform:scaleX(.86);color:#2a2a2a">100</span><span class="t" style="left:38.9px;top:115.7px;width:24px;text-align:center;font-size:8.4px;transform:scaleX(.86);color:#2a2a2a">150</span><span class="t" style="left:72.9px;top:115.7px;width:24px;text-align:center;font-size:8.4px;transform:scaleX(.86);color:#2a2a2a">200</span><span class="t" style="left:107.0px;top:115.7px;width:24px;text-align:center;font-size:8.4px;transform:scaleX(.86);color:#2a2a2a">300</span><span class="t" style="left:141.0px;top:115.7px;width:24px;text-align:center;font-size:8.4px;transform:scaleX(.86);color:#2a2a2a">400</span><span class="t" style="left:175.0px;top:115.7px;width:24px;text-align:center;font-size:8.4px;transform:scaleX(.86);color:#2a2a2a">500</span><svg style="left:0;top:0" width="205" height="135" viewBox="0 0 205 135" fill="#141414"><circle cx="16.9" cy="17.3" r="1.70"/><circle cx="50.9" cy="17.3" r="2.10"/><circle cx="84.9" cy="17.3" r="3.10"/><circle cx="119.0" cy="17.3" r="4.50"/><circle cx="153.0" cy="17.3" r="5.30"/><circle cx="187.0" cy="17.3" r="6.50"/><circle cx="16.9" cy="59.4" r="8.70"/><circle cx="50.9" cy="59.4" r="10.70"/><circle cx="84.9" cy="59.4" r="12.20"/><circle cx="119.0" cy="59.4" r="12.20"/><circle cx="153.0" cy="59.4" r="12.20"/><circle cx="187.0" cy="59.4" r="12.20"/><circle cx="16.9" cy="101.5" r="12.20"/><circle cx="50.9" cy="101.5" r="12.20"/><circle cx="84.9" cy="101.5" r="12.20"/><circle cx="119.0" cy="101.5" r="12.20"/><circle cx="153.0" cy="101.5" r="12.20"/><circle cx="187.0" cy="101.5" r="12.20"/><circle cx="16.9" cy="143.6" r="12.20"/><circle cx="50.9" cy="143.6" r="12.20"/><circle cx="84.9" cy="143.6" r="12.20"/><circle cx="119.0" cy="143.6" r="12.20"/></svg><i style="left:33.4px;top:0;width:1px;height:135px;background:#f4f4f4"></i><i style="left:67.4px;top:0;width:1px;height:135px;background:#f4f4f4"></i><i style="left:101.5px;top:0;width:1px;height:135px;background:#f4f4f4"></i><i style="left:135.5px;top:0;width:1px;height:135px;background:#f4f4f4"></i><i style="left:169.5px;top:0;width:1px;height:135px;background:#f4f4f4"></i><i style="left:0;top:41.5px;width:204px;height:1px;background:#f0f0f0"></i><i style="left:0;top:83.6px;width:204px;height:1px;background:#f0f0f0"></i><i style="left:0;top:125.7px;width:204px;height:1px;background:#f0f0f0"></i></div><svg style="left:624.5px;top:410px" width="8" height="7" viewBox="0 0 8 7"><path d="M.8 5L4 1.8L7.2 5" fill="none" stroke="#333" stroke-width="1.3"/></svg><div style="left:621px;top:441px;width:16px;height:67.6px;background:#cdcdcd"></div><svg style="left:624.5px;top:529.5px" width="8" height="7" viewBox="0 0 8 7"><path d="M.8 2L4 5.2L7.2 2" fill="none" stroke="#333" stroke-width="1.3"/></svg><div id="status" style="left:0;top:541px;width:637px;height:18px;background:#f0f0f0"></div><svg style="left:626.5px;top:547.5px" width="9" height="9" viewBox="0 0 9 9"><rect x="7" y="1" width="1.4" height="1.4" fill="#b8b8b8"/><rect x="4" y="4" width="1.4" height="1.4" fill="#b8b8b8"/><rect x="7" y="4" width="1.4" height="1.4" fill="#b8b8b8"/><rect x="1" y="7" width="1.4" height="1.4" fill="#b8b8b8"/><rect x="4" y="7" width="1.4" height="1.4" fill="#b8b8b8"/><rect x="7" y="7" width="1.4" height="1.4" fill="#b8b8b8"/></svg><span class="t" style="left:520.3px;top:531px;font-size:18.1px;line-height:20px;height:20px;font-style:italic;font-weight:bold;color:rgba(255,255,255,.9);text-shadow:0 0 1.6px rgba(140,140,140,.42),.5px .8px 1.2px rgba(130,130,130,.22);letter-spacing:-.1px">www.4MF.net</span>
</div>
</body></html>
